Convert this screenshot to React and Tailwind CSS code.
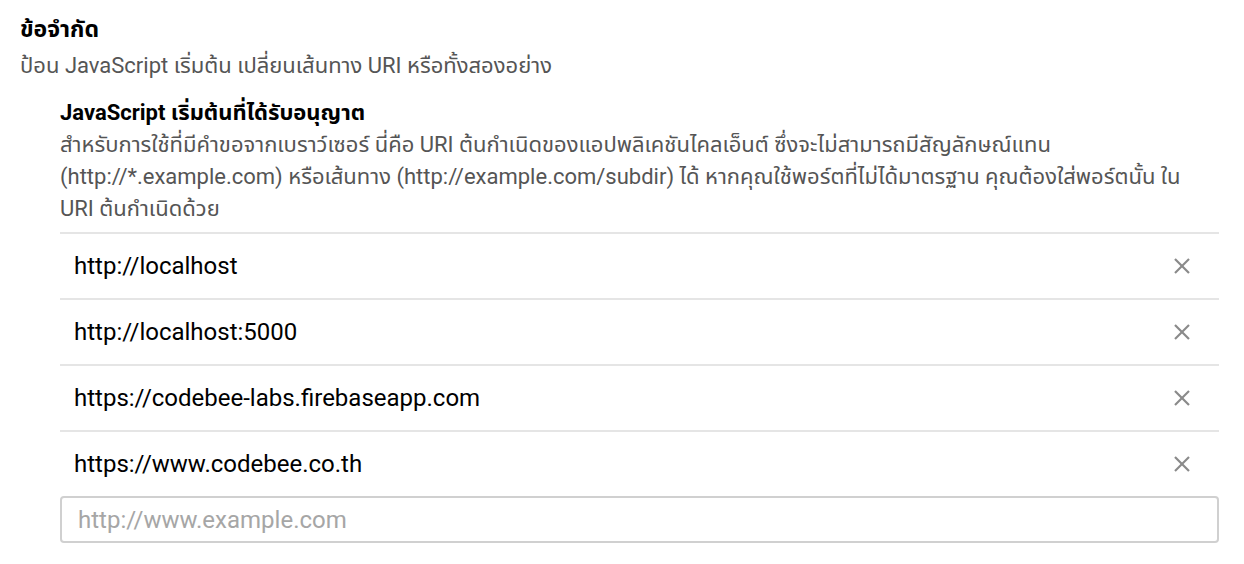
import React, { useState } from 'react'

const FONT = { fontFamily: 'Roboto, "Noto Sans Thai", "Noto Sans", sans-serif' }

function CloseIcon() {
    return (
        <svg width="18" height="18" viewBox="0 0 18 18" fill="none" stroke="#8a8a8a" strokeWidth="2.2">
            <line x1="2" y1="2" x2="16" y2="16" />
            <line x1="16" y1="2" x2="2" y2="16" />
        </svg>
    )
}

export default function App() {
    const [origins, setOrigins] = useState([
        'http://localhost',
        'http://localhost:5000',
        'https://codebee-labs.firebaseapp.com',
        'https://www.codebee.co.th',
    ])

    return (
        <div className="bg-white w-[1244px] h-[564px] pl-5 pt-3" style={FONT}>
            <div className="text-[23px] font-bold text-black leading-[36px]">ข้อจำกัด</div>
            <div className="text-[22px] text-[#555] leading-[36px]">
                ป้อน JavaScript เริ่มต้น เปลี่ยนเส้นทาง URI หรือทั้งสองอย่าง
            </div>

            <div className="ml-10 mt-[13px] w-[1159px]">
                <div className="text-[22px] font-bold text-black leading-[32px]">JavaScript เริ่มต้นที่ได้รับอนุญาต</div>
                <div className="text-[22px] text-[#555] leading-[32px] whitespace-nowrap">
                    สำหรับการใช้ที่มีคำขอจากเบราว์เซอร์ นี่คือ URI ต้นกำเนิดของแอปพลิเคชันไคลเอ็นต์ ซึ่งจะไม่สามารถมีสัญลักษณ์แทน
                    <br />
                    (http://*.example.com) หรือเส้นทาง (http://example.com/subdir) ได้ หากคุณใช้พอร์ตที่ไม่ได้มาตรฐาน คุณต้องใส่พอร์ตนั้น ใน
                    <br />
                    URI ต้นกำเนิดด้วย
                </div>

                <ul className="mt-[7px]">
                    {origins.map((o, i) => (
                        <li key={o} className="flex items-center justify-between h-[66px] border-t-2 border-[#e5e5e5] pl-[14px] pr-[28px]">
                            <span className="text-[24px] text-black">{o}</span>
                            <button onClick={() => setOrigins(origins.filter((_, j) => j !== i))} className="flex items-center">
                                <CloseIcon />
                            </button>
                        </li>
                    ))}
                </ul>

                <input
                    className="w-full h-[47px] border-2 border-[#d0d0d0] rounded-[4px] px-4 text-[24px] text-black placeholder:text-[#a6a6a6] outline-none"
                    placeholder="http://www.example.com"
                    style={FONT}
                />
            </div>
        </div>
    )
}
